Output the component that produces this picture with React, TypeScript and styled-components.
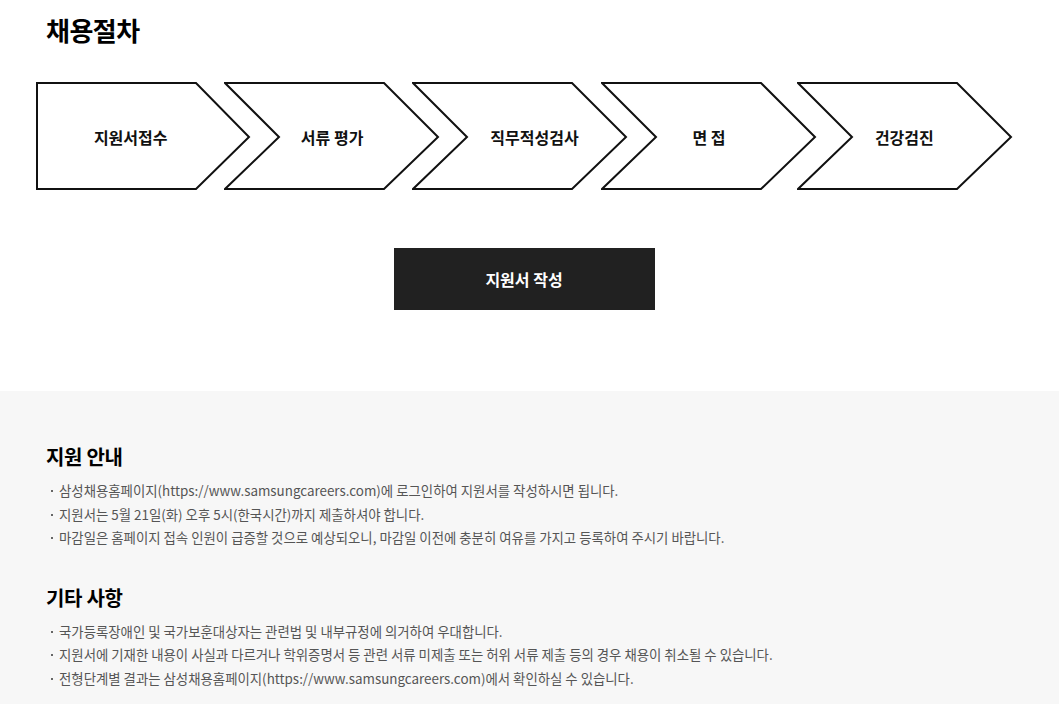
import styled, { createGlobalStyle } from "styled-components";

const STEPS = [
  { label: "지원서접수", gap: 0, shift: -26 },
  { label: "서류 평가", gap: -27, shift: 0 },
  { label: "직무적성검사", gap: -28, shift: 30 },
  { label: "면 접", gap: -26, shift: 0 },
  { label: "건강검진", gap: -20, shift: 0 },
];

const GUIDE = [
  "삼성채용홈페이지(https://www.samsungcareers.com)에 로그인하여 지원서를 작성하시면 됩니다.",
  "지원서는 5월 21일(화) 오후 5시(한국시간)까지 제출하셔야 합니다.",
  "마감일은 홈페이지 접속 인원이 급증할 것으로 예상되오니, 마감일 이전에 충분히 여유를 가지고 등록하여 주시기 바랍니다.",
];

const ETC = [
  "국가등록장애인 및 국가보훈대상자는 관련법 및 내부규정에 의거하여 우대합니다.",
  "지원서에 기재한 내용이 사실과 다르거나 학위증명서 등 관련 서류 미제출 또는 허위 서류 제출 등의 경우 채용이 취소될 수 있습니다.",
  "전형단계별 결과는 삼성채용홈페이지(https://www.samsungcareers.com)에서 확인하실 수 있습니다.",
];

const GlobalStyle = createGlobalStyle`
  body {
    margin: 0;
    background: #fff;
    font-family: "Noto Sans CJK KR", "Noto Sans", sans-serif;
    color: #000;
  }
`;

const StepShape = ({ first }: { first: boolean }) => (
  <ShapeSvg width="216" height="110" viewBox="0 0 216 110">
    <polygon
      points={
        first
          ? "1,1 160,1 213,55 160,107 1,107"
          : "1,1 160,1 214,55 160,107 1,107 55,55"
      }
      fill="#fff"
      stroke="#111"
      strokeWidth="2"
    />
  </ShapeSvg>
);

const App = () => {
  return (
    <>
      <GlobalStyle />
      <Top>
        <Title>채용절차</Title>
        <Content>
          <Steps>
            {STEPS.map((step, i) => (
              <Step key={step.label} gap={step.gap}>
                <StepShape first={i === 0} />
                <StepLabel shift={step.shift}>{step.label}</StepLabel>
              </Step>
            ))}
          </Steps>
          <ApplyButton>지원서 작성</ApplyButton>
        </Content>
      </Top>
      <Info>
        <Section>
          <SectionTitle>지원 안내</SectionTitle>
          <List>
            {GUIDE.map((item) => (
              <Item key={item}>{item}</Item>
            ))}
          </List>
        </Section>
        <Section>
          <SectionTitle>기타 사항</SectionTitle>
          <List>
            {ETC.map((item) => (
              <Item key={item}>{item}</Item>
            ))}
          </List>
        </Section>
      </Info>
    </>
  );
};

export default App;

const Top = styled.div`
  padding: 12px 0 81px;
  display: flex;
  flex-direction: column;
`;

const Title = styled.h1`
  margin: 0 0 0 46px;
  font-size: 26px;
  font-weight: 700;
  line-height: 36px;
  letter-spacing: -0.5px;
`;

const Content = styled.div`
  width: 976px;
  margin: 34px 0 0 36px;
  display: flex;
  flex-direction: column;
  align-items: center;
`;

const Steps = styled.div`
  width: 100%;
  display: flex;
`;

const Step = styled.div<{ gap: number }>`
  position: relative;
  width: 216px;
  height: 110px;
  margin-left: ${({ gap }) => gap}px;
  display: flex;
  align-items: center;
  justify-content: center;
`;

const ShapeSvg = styled.svg`
  position: absolute;
  inset: 0;
`;

const StepLabel = styled.span<{ shift: number }>`
  position: relative;
  left: ${({ shift }) => shift / 2}px;
  font-size: 16px;
  font-weight: 700;
  color: #111;
`;

const ApplyButton = styled.button`
  margin-top: 56px;
  width: 261px;
  height: 62px;
  border: none;
  background: #212121;
  color: #fff;
  font-family: inherit;
  font-size: 16px;
  font-weight: 700;
  cursor: pointer;
`;

const Info = styled.div`
  background: #f7f7f7;
  padding: 50px 46px 14px;
  display: flex;
  flex-direction: column;
  gap: 32px;
`;

const Section = styled.div`
  display: flex;
  flex-direction: column;
  gap: 6px;
`;

const SectionTitle = styled.h2`
  margin: 0;
  font-size: 20px;
  font-weight: 700;
  line-height: 32px;
  letter-spacing: -0.3px;
`;

const List = styled.ul`
  margin: 0;
  padding: 0;
  list-style: none;
`;

const Item = styled.li`
  position: relative;
  padding-left: 13px;
  font-size: 13.4px;
  line-height: 23.5px;
  color: #555;

  &::before {
    content: "";
    position: absolute;
    left: 5px;
    top: 11px;
    width: 2px;
    height: 2px;
    background: #666;
  }
`;
